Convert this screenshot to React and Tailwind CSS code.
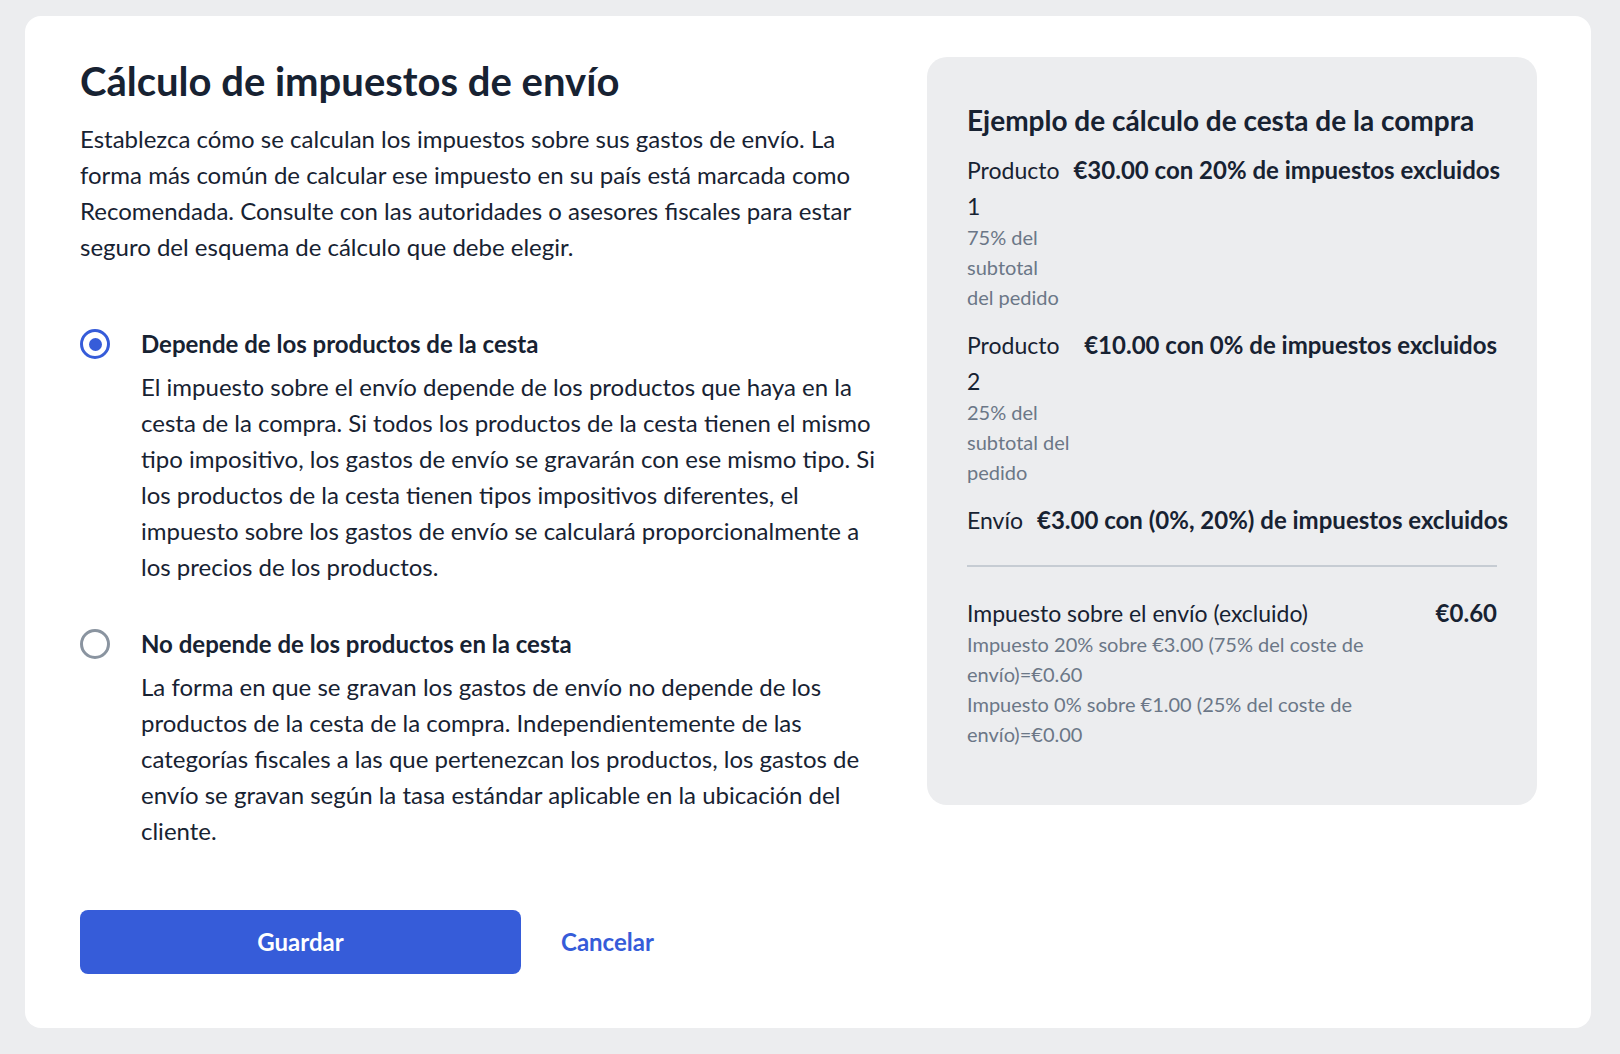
import React from 'react';

function Radio({ checked }) {
  return checked ? (
    <span className="mt-[3px] flex h-[30px] w-[30px] shrink-0 items-center justify-center rounded-full border-[3px] border-[#365cd9]">
      <span className="h-[13px] w-[13px] rounded-full bg-[#365cd9]" />
    </span>
  ) : (
    <span className="mt-[3px] h-[30px] w-[30px] shrink-0 rounded-full border-[3px] border-[#8a94a0]" />
  );
}

function Option({ checked, title, children, className }) {
  return (
    <label className={`flex gap-[31px] ${className}`}>
      <Radio checked={checked} />
      <div className="min-w-0">
        <p className="text-[24px] font-bold leading-[36px] text-[#172232]">{title}</p>
        <p className="mt-[7px] text-[24px] leading-[36px] text-[#172232]">{children}</p>
      </div>
    </label>
  );
}

function Line({ label, note, value, className }) {
  return (
    <div className={`flex gap-[14px] ${className}`}>
      <div className="flex-1">
        <p className="text-[23px] leading-[36px] text-[#172232]">{label}</p>
        {note && <p className="-mt-[2px] text-[20px] leading-[30px] text-[#6b7787]">{note}</p>}
      </div>
      <p className="shrink-0 whitespace-nowrap text-[24px] font-bold leading-[36px] text-[#172232]">{value}</p>
    </div>
  );
}

export default function App() {
  return (
    <div className="min-h-screen bg-[#ecedef] pl-[25px] pr-[29px] pt-[16px] pb-[26px] font-['Lato',sans-serif]">
      <div className="grid grid-cols-[1fr_610px] gap-[48px] rounded-[16px] bg-white pb-[54px] pl-[55px] pr-[54px] pt-[41px]">
        <div className="min-w-0">
          <h1 className="text-[40px] font-bold leading-[48px] text-[#172232]">Cálculo de impuestos de envío</h1>
          <p className="mt-[16px] text-[24px] leading-[36px] text-[#172232]">
            Establezca cómo se calculan los impuestos sobre sus gastos de envío. La forma más común de calcular ese
            impuesto en su país está marcada como Recomendada. Consulte con las autoridades o asesores fiscales para
            estar seguro del esquema de cálculo que debe elegir.
          </p>

          <Option checked className="mt-[61px]" title="Depende de los productos de la cesta">
            El impuesto sobre el envío depende de los productos que haya en la cesta de la compra. Si todos los
            productos de la cesta tienen el mismo tipo impositivo, los gastos de envío se gravarán con ese mismo tipo.
            Si los productos de la cesta tienen tipos impositivos diferentes, el impuesto sobre los gastos de envío se
            calculará proporcionalmente a los precios de los productos.
          </Option>

          <Option className="mt-[41px]" title="No depende de los productos en la cesta">
            La forma en que se gravan los gastos de envío no depende de los productos de la cesta de la compra.
            Independientemente de las categorías fiscales a las que pertenezcan los productos, los gastos de envío se
            gravan según la tasa estándar aplicable en la ubicación del cliente.
          </Option>

          <div className="mt-[61px] flex items-center gap-[40px]">
            <button className="h-[64px] w-[441px] rounded-[8px] bg-[#365cd9] text-[24px] font-bold text-white">
              Guardar
            </button>
            <button className="text-[24px] font-bold text-[#365cd9]">Cancelar</button>
          </div>
        </div>

        <div className="self-start rounded-[20px] bg-[#ecedef] px-[40px] pb-[56px] pt-[44px]">
          <h2 className="text-[28px] font-bold leading-[38px] text-[#172232]">
            Ejemplo de cálculo de cesta de la compra
          </h2>
          <Line
            className="mt-[13px]"
            label="Producto 1"
            note="75% del subtotal del pedido"
            value="€30.00 con 20% de impuestos excluidos"
          />
          <Line
            className="mt-[15px]"
            label="Producto 2"
            note="25% del subtotal del pedido"
            value="€10.00 con 0% de impuestos excluidos"
          />
          <Line className="mt-[15px]" label="Envío" value="€3.00 con (0%, 20%) de impuestos excluidos" />

          <div className="mt-[27px] border-t-[2px] border-[#c6ccd3] pt-[28px]">
            <div className="flex justify-between">
              <div className="w-[410px]">
                <p className="text-[23px] leading-[36px] text-[#172232]">Impuesto sobre el envío (excluido)</p>
                <p className="-mt-[2px] text-[20px] leading-[30px] text-[#6b7787]">
                  Impuesto 20% sobre €3.00 (75% del coste de envío)=€0.60
                </p>
                <p className="text-[20px] leading-[30px] text-[#6b7787]">
                  Impuesto 0% sobre €1.00 (25% del coste de envío)=€0.00
                </p>
              </div>
              <p className="text-[24px] font-bold leading-[36px] text-[#172232]">€0.60</p>
            </div>
          </div>
        </div>
      </div>
    </div>
  );
}
